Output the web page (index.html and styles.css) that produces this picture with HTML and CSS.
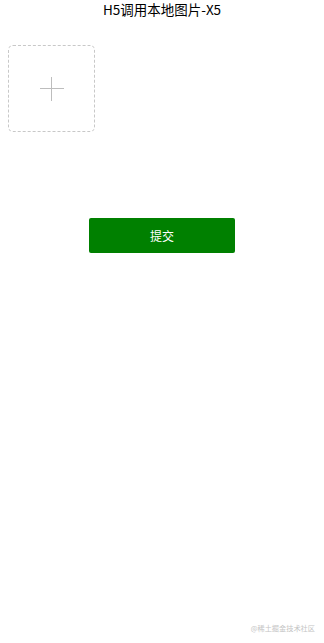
FILE: index.html
```html
<!DOCTYPE html>
<html lang="zh">
  <head>
    <meta charset="UTF-8" />
    <meta name="viewport" content="width=device-width, initial-scale=1.0" />
    <title>H5调用本地图片-X5</title>
    <link rel="stylesheet" href="styles.css">
  </head>
  <body>
    <div class="page">
      <h1 class="title">H5调用本地图片-X5</h1>

      <div class="upload-list">
        <label class="upload-box">
          <span class="plus"></span>
        </label>
      </div>

      <div class="actions">
        <button class="submit-btn">提交</button>
      </div>

      <div class="watermark">@稀土掘金技术社区</div>
    </div>
  </body>
</html>
```

FILE: styles.css
```css
* {
  box-sizing: border-box;
  font-family: "Noto Sans CJK SC", "Noto Sans", sans-serif;
}

html,
body {
  margin: 0;
  padding: 0;
  background: #fff;
  height: 100vh;
  overflow: hidden;
}

.page {
  display: flex;
  flex-direction: column;
  height: 100vh;
}

.title {
  margin: 0;
  font-size: 13.5px;
  font-weight: normal;
  line-height: 18px;
  text-align: center;
  color: #000;
}

.upload-list {
  display: flex;
  padding: 27px 8px 0;
}

.upload-box {
  width: 87px;
  height: 87px;
  border: 1px dashed #c8c8c8;
  border-radius: 5px;
  display: flex;
  align-items: center;
  justify-content: center;
}

.plus {
  position: relative;
  width: 24px;
  height: 24px;
}

.plus::before,
.plus::after {
  content: "";
  position: absolute;
  background: #bdbdbd;
}

.plus::before {
  left: 0;
  top: 11px;
  width: 24px;
  height: 1px;
}

.plus::after {
  top: 0;
  left: 11px;
  width: 1px;
  height: 24px;
}

.actions {
  display: flex;
  justify-content: center;
  padding-top: 86px;
}

.submit-btn {
  width: 146px;
  height: 35px;
  border: none;
  border-radius: 2px;
  background: #008000;
  color: #fff;
  font-size: 12px;
  cursor: pointer;
}

.watermark {
  margin-top: auto;
  align-self: flex-end;
  padding: 0 9px 10px 0;
  font-size: 7.2px;
  line-height: 10px;
  color: #c4c4c4;
}
```
